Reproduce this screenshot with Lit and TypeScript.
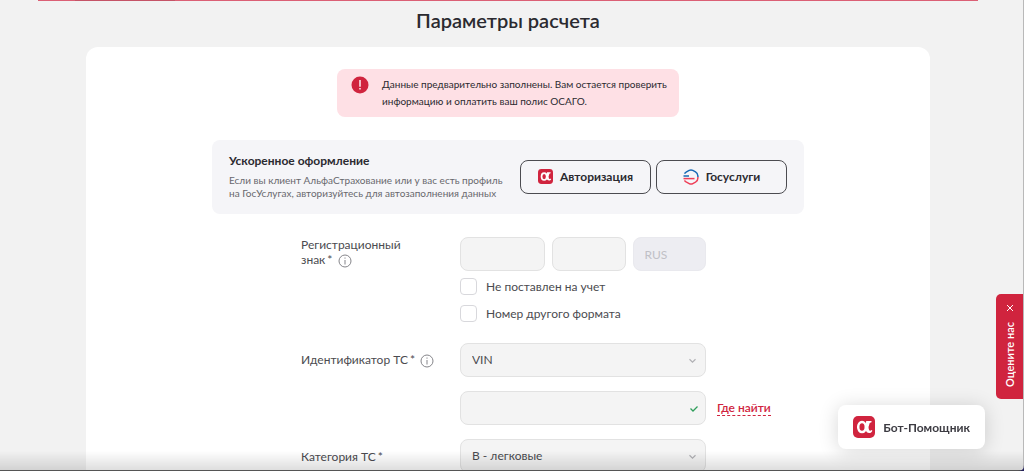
import { LitElement, html, css, svg } from "lit";
import { customElement } from "lit/decorators.js";

@customElement("alfa-logo")
export class AlfaLogo extends LitElement {
  static styles = css`
    :host {
      display: block;
      flex: none;
    }
    .mark {
      display: block;
      width: 100%;
      height: 100%;
    }
  `;

  render() {
    return html`
      <svg class="mark" viewBox="0 0 22 22" aria-hidden="true">
        <rect width="22" height="22" rx="5" fill="#d0243e" />
        <ellipse cx="9" cy="11.100" rx="3.800" ry="5" fill="none" stroke="#fff" stroke-width="2.500" />
        <path
          d="M13.200 4.900h5.300v1.300l-1.800.7-1.200 4.200c.2 2.500.7 3.700 1.600 3.700.6 0 1-.3 1.400-.8l.9.700c-.7 1.600-1.700 2.300-3.200 2.300-1.900 0-3-1.200-3.500-3.300l-.7-2.700.8-3z"
          fill="#fff"
        />
      </svg>
    `;
  }
}

@customElement("info-hint")
export class InfoHint extends LitElement {
  static styles = css`
    :host {
      display: inline-block;
      margin-left: 2px;
      vertical-align: middle;
    }
    .hint {
      display: block;
      width: 14px;
      height: 14px;
      padding: 0;
      border: 0;
      background: none;
      color: #85858a;
    }
    .glyph {
      display: block;
      width: 14px;
      height: 14px;
    }
  `;

  render() {
    return html`
      <button class="hint" type="button" aria-label="Подсказка">
        <svg class="glyph" viewBox="0 0 14 14" fill="none" stroke="currentColor" aria-hidden="true">
          <circle cx="7" cy="7" r="6" />
          <path d="M7 6v4.500M7 3.500v1.200" />
        </svg>
      </button>
    `;
  }
}

@customElement("app-root")
export class AppRoot extends LitElement {
  static styles = css`
    :host {
      display: block;
      height: 100vh;
      overflow: hidden;
      background: #f2f2f2;
      color: #4b4b50;
      font-family: Lato, "Open Sans", sans-serif;
      font-size: 12px;
      line-height: 15px;
    }
    .page {
      box-sizing: border-box;
      height: 100%;
      padding-right: 8px;
      overflow-y: auto;
      scrollbar-width: none;
    }
    .banner {
      display: flex;
      height: 1px;
      margin: 0 38px;
      padding-left: 37px;
      background: #db6075;
    }
    .banner-part {
      width: 100px;
      background: #c55467;
    }
    .title {
      margin: 5px 0 13px;
      color: #2b2a30;
      font-size: 20px;
      line-height: 28px;
      font-weight: 600;
      text-align: center;
    }
    .card {
      box-sizing: border-box;
      max-width: 844px;
      margin: 0 auto;
      padding: 22px 24px 40px;
      border-radius: 12px;
      background: #fff;
    }
    .alert {
      display: flex;
      box-sizing: border-box;
      max-width: 342px;
      margin: 0 auto 23px;
      padding: 7px 8px 7px 14px;
      gap: 13px;
      border-radius: 8px;
      background: #fee0e5;
      color: #2b2a30;
      font-size: 10px;
      line-height: 17px;
    }
    .alert-icon {
      flex: none;
      width: 18px;
      height: 18px;
    }
    .alert-text {
      margin: 0;
    }
    .fast {
      display: flex;
      box-sizing: border-box;
      max-width: 592px;
      margin: 0 auto 23px;
      padding: 13px 17px 14px;
      align-items: center;
      justify-content: space-between;
      gap: 12px;
      border-radius: 8px;
      background: #f5f5f8;
    }
    .fast-title {
      margin: 0 0 5px;
      color: #2b2a30;
      font-size: 12px;
      line-height: 16px;
      font-weight: 700;
    }
    .fast-text {
      margin: 0;
      color: #68686d;
      font-size: 10px;
      line-height: 13px;
    }
    .actions {
      display: flex;
      gap: 5px;
    }
    .action {
      display: flex;
      box-sizing: border-box;
      width: 131px;
      height: 34px;
      padding: 0;
      align-items: center;
      justify-content: center;
      gap: 7px;
      border: 1px solid #4b4b50;
      border-radius: 8px;
      background: transparent;
      color: #2b2a30;
      font: inherit;
      font-weight: 700;
    }
    .action-logo {
      width: 15px;
      height: 15px;
    }
    .gos-logo {
      width: 16px;
      height: 16px;
    }
    .form {
      display: grid;
      box-sizing: border-box;
      max-width: 592px;
      margin: 0 auto;
      padding-left: 89px;
      grid-template-columns: 159px 246px 1fr;
      row-gap: 14px;
      align-items: center;
    }
    .label {
      grid-column: 1;
    }
    .label-top {
      align-self: start;
    }
    .required {
      margin-left: 2px;
    }
    .control {
      grid-column: 2;
    }
    .plate {
      display: grid;
      grid-template-columns: 85px 1fr 1fr;
      gap: 7px;
    }
    .input,
    .select {
      box-sizing: border-box;
      width: 100%;
      height: 34px;
      margin: 0;
      padding: 0 11px;
      border: 1px solid #e2e2e2;
      border-radius: 8px;
      background: #f4f4f4;
      color: #4b4b50;
      font: inherit;
    }
    .input:disabled {
      border-color: #e9e9ee;
      background: #ededf2;
      color: #c0c0c6;
    }
    .select {
      padding-bottom: 2px;
      appearance: none;
    }
    .field {
      display: grid;
      grid-template-columns: 1fr 17px;
      align-items: center;
    }
    .field-input {
      grid-area: 1 / 1 / 2 / 3;
    }
    .field-icon {
      grid-area: 1 / 2 / 2 / 3;
      width: 9px;
      height: 9px;
      pointer-events: none;
    }
    .checks {
      display: grid;
      margin: 7px 0;
      gap: 10px;
    }
    .check {
      display: flex;
      align-items: center;
      gap: 9px;
    }
    .box {
      box-sizing: border-box;
      width: 17px;
      height: 17px;
      margin: 0;
      border: 1px solid #d8d8dc;
      border-radius: 4px;
      background: #fff;
      appearance: none;
    }
    .where {
      justify-self: start;
      margin-left: 11px;
      border-bottom: 1px dashed #d0243e;
      color: #d0243e;
      font-weight: 600;
      text-decoration: none;
    }
    .rate {
      position: fixed;
      top: 294px;
      right: 1px;
      display: flex;
      box-sizing: border-box;
      width: 27px;
      padding: 10px 0 12px;
      flex-direction: column;
      align-items: center;
      gap: 10px;
      border-radius: 5px 0 0 5px;
      background: #d0243e;
      color: #fff;
    }
    .rate-close,
    .rate-open {
      padding: 0;
      border: 0;
      background: none;
      color: inherit;
      font: inherit;
      font-size: 11px;
      font-weight: 600;
    }
    .rate-open {
      writing-mode: vertical-rl;
      transform: rotate(180deg);
    }
    .cross {
      display: block;
      width: 8px;
      height: 8px;
    }
    .bot {
      position: fixed;
      right: 39px;
      bottom: 22px;
      display: flex;
      box-sizing: border-box;
      height: 44px;
      padding: 0 15px;
      align-items: center;
      gap: 8px;
      border: 0;
      border-radius: 8px;
      background: #fff;
      box-shadow: 0 2px 20px rgba(0, 0, 0, 0.16);
      color: #3c3b42;
      font: inherit;
      font-weight: 700;
      white-space: nowrap;
    }
    .bot-logo {
      width: 22px;
      height: 22px;
    }
    .shade {
      position: fixed;
      right: 0;
      bottom: 0;
      left: 0;
      box-sizing: border-box;
      height: 20px;
      border-bottom: 1px solid #555;
      background: linear-gradient(transparent, rgba(0, 0, 0, 0.13));
      pointer-events: none;
    }
    .edge {
      position: fixed;
      top: 0;
      right: 0;
      bottom: 0;
      width: 1px;
      background: #b9b9b9;
    }
    .corner {
      position: fixed;
      right: 0;
      bottom: 0;
      width: 6px;
      height: 6px;
    }
  `;

  private gosLogo() {
    return svg`
      <svg class="gos-logo" viewBox="0 0 16 16" fill="none" stroke-width="1.500" aria-hidden="true">
        <path d="M1.500 4.700Q2.200 3.500 3.500 2.800L6.200 1.400Q8 .5 9.800 1.400L12.500 2.800Q14.900 4.200 14.900 7V8" stroke="#1769b5" />
        <path d="M14.900 8V9Q14.900 11.800 12.500 13.200L9.800 14.600Q8 15.500 6.200 14.600L3.500 13.200Q2.200 12.500 1.500 11.300" stroke="#ee3f58" />
        <path d="M.5 7h5.500" stroke="#1769b5" />
        <path d="M.5 9.600h11" stroke="#ee3f58" />
      </svg>
    `;
  }

  private selectField(id: string, value: string) {
    return html`
      <div class="control field">
        <select class="select field-input" id=${id}>
          <option>${value}</option>
        </select>
        <svg class="field-icon" viewBox="0 0 9 9" fill="none" stroke="#b0b0b4" stroke-width="1.200" aria-hidden="true">
          <path d="M.5 3.200l3 2.900 3-2.900" />
        </svg>
      </div>
    `;
  }

  render() {
    return html`
      <main class="page">
        <div class="banner"><div class="banner-part"></div></div>
        <h1 class="title">Параметры расчета</h1>
        <section class="card">
          <div class="alert" role="status">
            <svg class="alert-icon" viewBox="0 0 18 18" aria-hidden="true">
              <circle cx="9" cy="9" r="8.500" fill="#d0243e" />
              <path d="M9 4v6.800M9 12v1.600" stroke="#fff" stroke-width="1.400" />
            </svg>
            <p class="alert-text">
              Данные предварительно заполнены. Вам остается проверить<br />
              информацию и оплатить ваш полис ОСАГО.
            </p>
          </div>

          <div class="fast">
            <div>
              <h2 class="fast-title">Ускоренное оформление</h2>
              <p class="fast-text">
                Если вы клиент АльфаСтрахование или у вас есть профиль<br />
                на ГосУслугах, авторизуйтесь для автозаполнения данных
              </p>
            </div>
            <div class="actions">
              <button class="action" type="button">
                <alfa-logo class="action-logo"></alfa-logo>Авторизация
              </button>
              <button class="action" type="button">${this.gosLogo()}Госуслуги</button>
            </div>
          </div>

          <form class="form">
            <div class="label label-top">
              <label for="plate">Регистрационный<br />знак<span class="required">*</span></label>
              <info-hint></info-hint>
            </div>
            <div class="control">
              <div class="plate">
                <input class="input" id="plate" type="text" />
                <input class="input" type="text" aria-label="Регион" />
                <input class="input" type="text" value="RUS" aria-label="Страна" disabled />
              </div>
              <div class="checks">
                <label class="check"><input class="box" type="checkbox" />Не поставлен на учет</label>
                <label class="check"><input class="box" type="checkbox" />Номер другого формата</label>
              </div>
            </div>

            <div class="label">
              <label for="ident">Идентификатор ТС<span class="required">*</span></label>
              <info-hint></info-hint>
            </div>
            ${this.selectField("ident", "VIN")}

            <div class="control field">
              <input class="input field-input" type="text" aria-label="VIN" />
              <svg class="field-icon" viewBox="0 0 9 9" fill="none" stroke="#2f9e5b" stroke-width="1.300" aria-hidden="true">
                <path d="M1.500 4.500l2.500 2.500L8.500 2.500" />
              </svg>
            </div>
            <a class="where" href="#vin">Где найти</a>

            <label class="label" for="category">Категория ТС<span class="required">*</span></label>
            ${this.selectField("category", "B - легковые")}
          </form>
        </section>
      </main>

      <div class="shade"></div>
      <div class="edge"></div>
      <svg class="corner" viewBox="0 0 6 6" aria-hidden="true">
        <path d="M6 0v6H0Q6 6 6 0z" fill="#24205a" />
      </svg>

      <div class="rate">
        <button class="rate-close" type="button" aria-label="Закрыть">
          <svg class="cross" viewBox="0 0 8 8" stroke="#fff" aria-hidden="true">
            <path d="M1 1l6 6M7 1L1 7" />
          </svg>
        </button>
        <button class="rate-open" type="button">Оцените нас</button>
      </div>
      <button class="bot" type="button"><alfa-logo class="bot-logo"></alfa-logo>Бот-Помощник</button>
    `;
  }
}
